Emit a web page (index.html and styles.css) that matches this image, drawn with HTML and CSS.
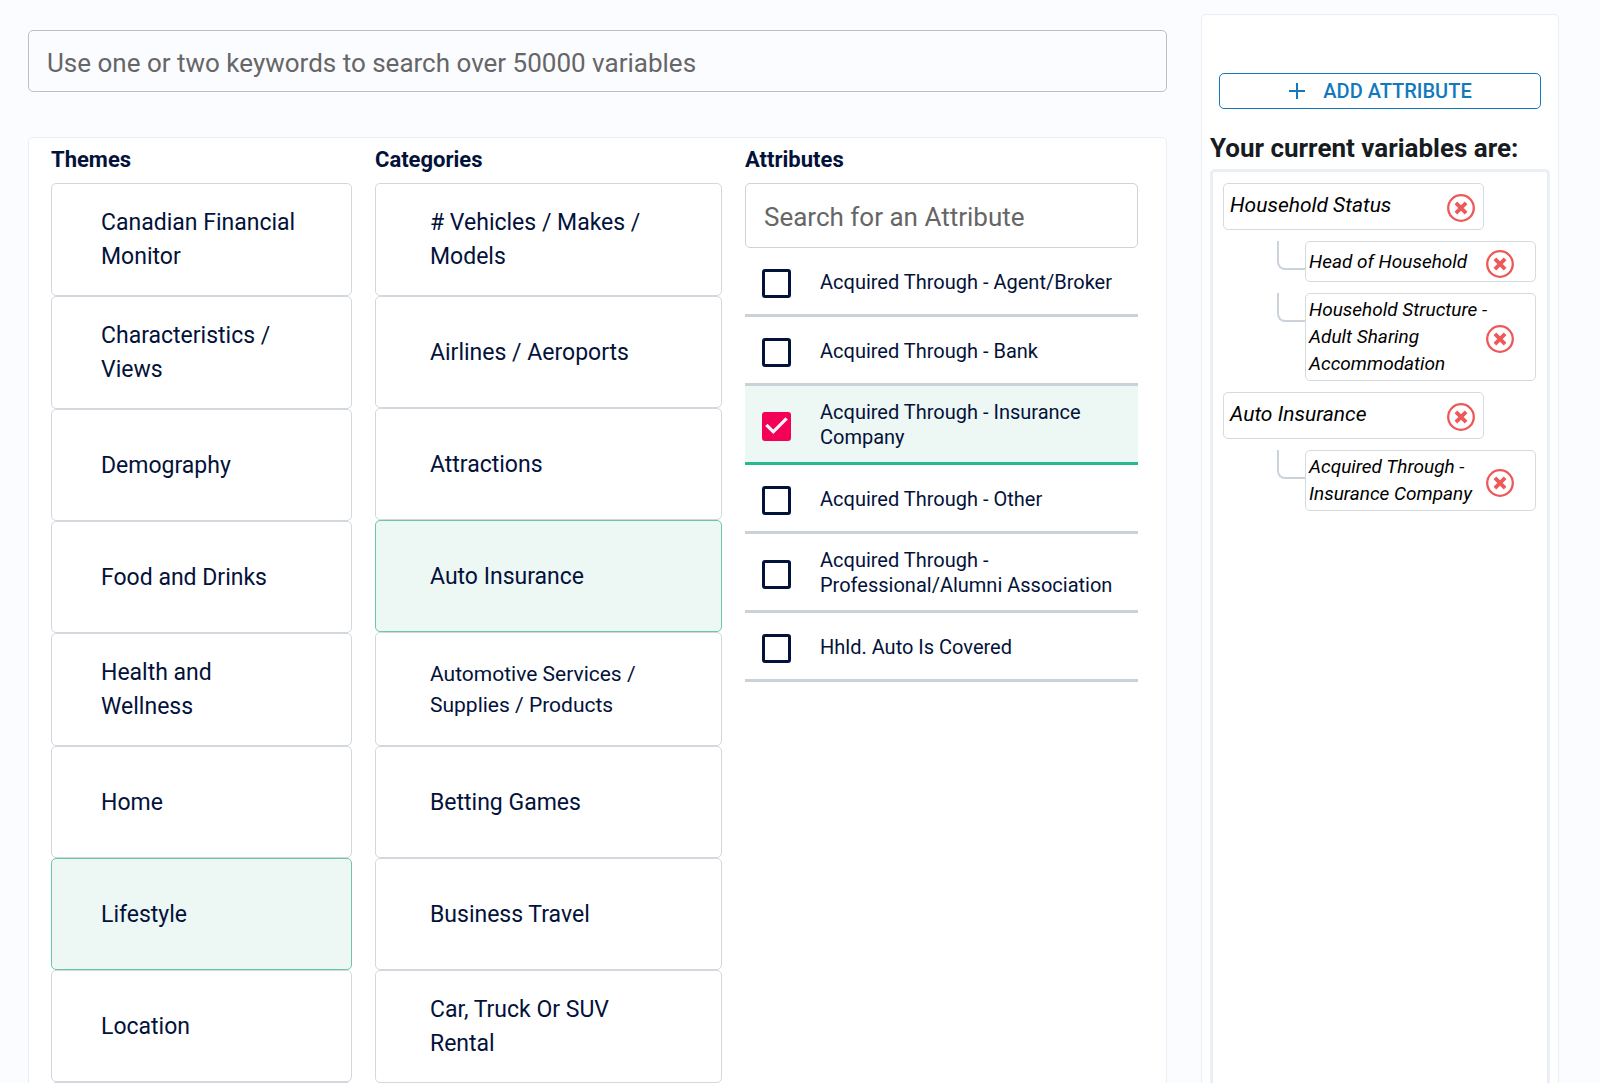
FILE: index.html
```html
<!DOCTYPE html>
<html lang="en">
<head>
    <meta charset="utf-8">
    <meta name="viewport" content="width=device-width, initial-scale=1.0">
    <title>Variables</title>
    <link rel="stylesheet" href="styles.css">
</head>
<body>
<svg class="sprite" aria-hidden="true">
    <symbol id="remove" viewBox="0 0 28 28">
        <circle cx="14" cy="14" r="12.8" fill="none" stroke="currentColor" stroke-width="2.3"/>
        <path d="M8.9 8.9l10.2 10.2M19.1 8.9L8.9 19.1" fill="none" stroke="currentColor" stroke-width="3.8"/>
    </symbol>
</svg>
<div class="page">
    <main class="browse">
        <input class="search" type="text" aria-label="Search variables" placeholder="Use one or two keywords to search over 50000 variables">

        <div class="card columns">
            <section>
                <h2>Themes</h2>
                <div class="list">
                    <button class="item">Canadian Financial Monitor</button>
                    <button class="item">Characteristics / Views</button>
                    <button class="item">Demography</button>
                    <button class="item">Food and Drinks</button>
                    <button class="item">Health and Wellness</button>
                    <button class="item">Home</button>
                    <button class="item selected">Lifestyle</button>
                    <button class="item">Location</button>
                    <div class="item"></div>
                </div>
            </section>

            <section>
                <h2>Categories</h2>
                <div class="list wide">
                    <button class="item"># Vehicles / Makes / Models</button>
                    <button class="item">Airlines / Aeroports</button>
                    <button class="item">Attractions</button>
                    <button class="item selected">Auto Insurance</button>
                    <button class="item long">Automotive Services / Supplies / Products</button>
                    <button class="item">Betting Games</button>
                    <button class="item">Business Travel</button>
                    <button class="item">Car, Truck Or SUV Rental</button>
                    <div class="item"></div>
                </div>
            </section>

            <section>
                <h2>Attributes</h2>
                <input class="search attr-search" type="text" aria-label="Search attributes" placeholder="Search for an Attribute">
                <label class="attr"><input type="checkbox"><span>Acquired Through - Agent/Broker</span></label>
                <label class="attr"><input type="checkbox"><span>Acquired Through - Bank</span></label>
                <label class="attr checked"><input type="checkbox" checked><span>Acquired Through - Insurance Company</span></label>
                <label class="attr"><input type="checkbox"><span>Acquired Through - Other</span></label>
                <label class="attr"><input type="checkbox"><span>Acquired Through - Professional/Alumni Association</span></label>
                <label class="attr"><input type="checkbox"><span>Hhld. Auto Is Covered</span></label>
            </section>
        </div>
    </main>

    <aside class="card side">
        <button class="add">
            <svg width="18" height="18" viewBox="0 0 18 18"><path d="M9 1v16M1 9h16" stroke="currentColor" stroke-width="2"/></svg>
            ADD ATTRIBUTE
        </button>
        <h1>Your current variables are:</h1>
        <div class="variables">
            <div class="chip">
                <span>Household Status</span>
                <button class="remove" aria-label="Remove"><svg><use href="#remove"/></svg></button>
            </div>
            <div class="branch">
                <div class="chip small">
                    <span>Head of Household</span>
                    <button class="remove" aria-label="Remove"><svg><use href="#remove"/></svg></button>
                </div>
            </div>
            <div class="branch">
                <div class="chip small">
                    <span>Household Structure - Adult Sharing Accommodation</span>
                    <button class="remove" aria-label="Remove"><svg><use href="#remove"/></svg></button>
                </div>
            </div>
            <div class="chip">
                <span>Auto Insurance</span>
                <button class="remove" aria-label="Remove"><svg><use href="#remove"/></svg></button>
            </div>
            <div class="branch">
                <div class="chip small">
                    <span>Acquired Through - Insurance Company</span>
                    <button class="remove" aria-label="Remove"><svg><use href="#remove"/></svg></button>
                </div>
            </div>
        </div>
    </aside>
</div>
</body>
</html>
```
FILE: styles.css
```css
* {
    box-sizing: border-box;
}
body {
    margin: 0;
    background: #fbfcff;
    color: #03123a;
    font-family: Roboto, "Liberation Sans", sans-serif;
}
button, input {
    font-family: inherit;
    color: inherit;
}
button {
    cursor: pointer;
}
.sprite {
    display: none;
}
.page {
    display: grid;
    grid-template-columns: 1139fr 358fr;
    gap: 34px;
    height: 100vh;
    padding: 14px 41px 0 28px;
    overflow: hidden;
}
.card {
    background: #fff;
    border: 1px solid #e9eef5;
    border-bottom: 0;
    border-radius: 5px 5px 0 0;
}

/* left side */
.browse {
    display: flex;
    flex-direction: column;
    gap: 45px;
    min-height: 0;
    padding-top: 16px;
}
.search {
    width: 100%;
    height: 62px;
    flex: none;
    padding: 4px 18px 0;
    border: 1px solid #bdbfc3;
    border-radius: 5px;
    background: transparent;
    font-size: 26px;
}
.search::placeholder {
    color: #666;
    opacity: 1;
}
.columns {
    flex: 1;
    min-height: 0;
    display: grid;
    grid-template-columns: 301fr 347fr 393fr;
    gap: 23px;
    padding: 6px 28px 0 22px;
}
h2 {
    margin: 0 0 7px;
    font-size: 22px;
    line-height: 32px;
}
.list {
    display: flex;
    flex-direction: column;
}
.item {
    display: flex;
    align-items: center;
    min-height: 112px;
    padding: 22px 49px 21px;
    border: 1px solid #d3d8de;
    border-radius: 5px;
    background: #fff;
    font-size: 23px;
    line-height: 34px;
    text-align: left;
}
.wide .item {
    padding-left: 54px;
    padding-right: 54px;
}
.item.long {
    min-height: 114px;
    font-size: 21px;
    line-height: 31px;
}
.item.selected {
    border-color: #6cc7a6;
    background: #edf7f4;
}

/* attributes */
.attr-search {
    height: 65px;
    display: block;
    padding-top: 2px;
    border-color: #d0d2d5;
}
.attr {
    display: flex;
    align-items: center;
    gap: 29px;
    min-height: 69px;
    padding: 14px 16px 12px 17px;
    border-bottom: 3px solid #cbd1d9;
    font-size: 20px;
    line-height: 25px;
    cursor: pointer;
}
.attr.checked {
    background: #edf7f4;
    border-color: #26b990;
}
.attr input {
    appearance: none;
    flex: none;
    width: 29px;
    height: 29px;
    margin: 2px 0 0;
    border: 3px solid #03123a;
    border-radius: 3px;
}
.attr input:checked {
    border: 0;
    background: #f50057;
}
.attr input:checked::before {
    content: "";
    display: block;
    height: 100%;
    background: #edf7f4;
    clip-path: polygon(39% 78%, 11% 50%, 19% 42%, 39% 62%, 81% 20%, 89% 28%);
}

/* right side */
.side {
    display: flex;
    flex-direction: column;
    min-height: 0;
    padding: 58px 8px 0;
}
.add {
    display: flex;
    align-items: center;
    justify-content: center;
    gap: 17px;
    height: 36px;
    margin: 0 9px;
    border: 1px solid #1279bd;
    border-radius: 5px;
    background: #fff;
    color: #1279bd;
    font-size: 20px;
    font-weight: 500;
}
h1 {
    margin: 24px 0 5px;
    color: #171b22;
    font-size: 26px;
    line-height: 31px;
}
.variables {
    flex: 1;
    display: flex;
    flex-direction: column;
    gap: 11px;
    padding: 11px 11px 0 10px;
    border: 3px solid #e9eff4;
    border-bottom: 0;
    border-radius: 5px 5px 0 0;
    color: #000;
    font-style: italic;
}
.chip {
    display: flex;
    align-items: center;
    justify-content: space-between;
    min-height: 47px;
    margin-right: 52px;
    padding: 0 8px 2px 6px;
    border: 1px solid #d5dade;
    border-radius: 5px;
    font-size: 21px;
    line-height: 27px;
}
.branch {
    display: flex;
    margin-left: 54px;
}
/* elbow line from the parent down to the chip */
.branch::before {
    content: "";
    width: 26px;
    height: 27px;
    border: solid #ccd2d9;
    border-width: 0 0 2px 2px;
    border-bottom-left-radius: 8px;
}
.chip.small {
    flex: 1;
    min-height: 41px;
    margin: 0;
    padding: 2px 21px 3px 3px;
    font-size: 19px;
}
.chip.small span {
    margin-right: -4px;
}
.remove {
    flex: none;
    width: 28px;
    height: 28px;
    margin-top: 5px;
    padding: 0;
    border: 0;
    background: none;
    color: #ef5858;
}
.remove svg {
    display: block;
    width: 28px;
    height: 28px;
}
```
